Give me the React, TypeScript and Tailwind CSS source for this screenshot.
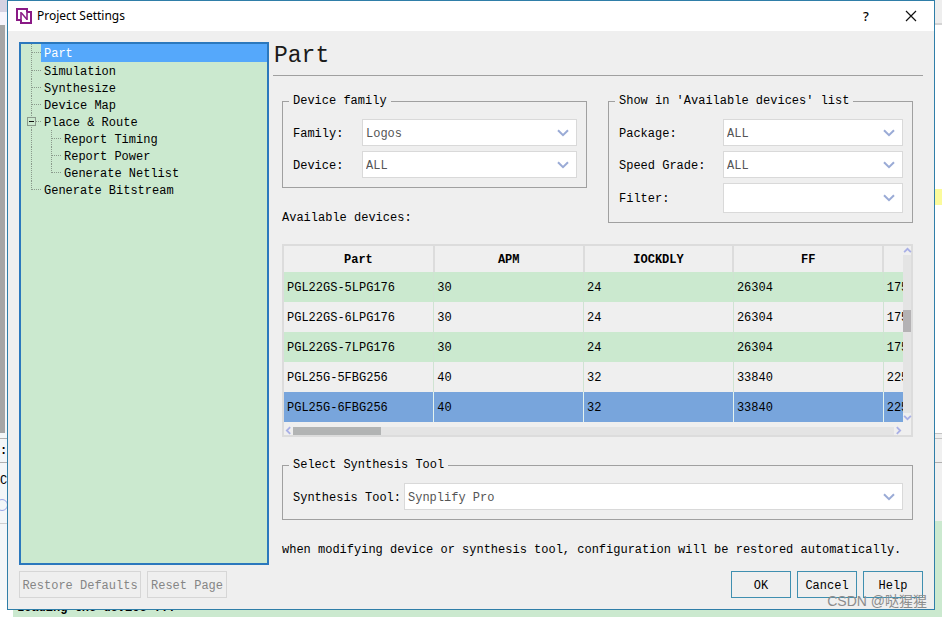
import React from "react";

const mono = "font-['Liberation_Mono','Courier_New',monospace]";

type TreeItem = { label: string; level: 0 | 1; last?: boolean; open?: boolean; selected?: boolean };

const pages: TreeItem[] = [
  { label: "Part", level: 0, selected: true },
  { label: "Simulation", level: 0 },
  { label: "Synthesize", level: 0 },
  { label: "Device Map", level: 0 },
  { label: "Place & Route", level: 0, open: true },
  { label: "Report Timing", level: 1 },
  { label: "Report Power", level: 1 },
  { label: "Generate Netlist", level: 1, last: true },
  { label: "Generate Bitstream", level: 0, last: true },
];

const columns = ["Part", "APM", "IOCKDLY", "FF", ""];

const devices = [
  ["PGL22GS-5LPG176", "30", "24", "26304", "175"],
  ["PGL22GS-6LPG176", "30", "24", "26304", "175"],
  ["PGL22GS-7LPG176", "30", "24", "26304", "175"],
  ["PGL25G-5FBG256", "40", "32", "33840", "225"],
  ["PGL25G-6FBG256", "40", "32", "33840", "225"],
];

function Logo() {
  return (
    <svg width="16" height="16" viewBox="0 0 16 16" fill="none" stroke="#8a1a86" strokeWidth="2" aria-hidden="true">
      <path d="M5 12H1V1h10v3" />
      <path d="M11 4h4v11H5v-3" />
      <path d="M5 12V4" strokeWidth="1.6" />
      <path d="M5.5 5l5.5 6.5" strokeWidth="1.4" />
      <path d="M11 12V4" strokeWidth="1.6" />
    </svg>
  );
}

function Guide({ branch, stop, open }: { branch: boolean; stop?: boolean; open?: boolean }) {
  return (
    <svg width="20" height="17" viewBox="0 0 20 17" className="shrink-0" stroke="#8a9a8c" shapeRendering="crispEdges" aria-hidden="true">
      <line x1="10.5" y1="0" x2="10.5" y2={stop ? 9 : 17} strokeDasharray="1 1" />
      {branch && <line x1="11" y1="8.5" x2="20" y2="8.5" strokeDasharray="1 1" />}
      {open && (
        <>
          <rect x="6.5" y="4.5" width="8" height="8" fill="#cbe9cf" stroke="#8a9a8c" />
          <line x1="8" y1="8.5" x2="13" y2="8.5" stroke="#111" />
        </>
      )}
    </svg>
  );
}

function Chevron({ className = "" }: { className?: string }) {
  return (
    <svg width="12" height="8" viewBox="0 0 12 8" fill="none" stroke="#9aabd6" strokeWidth="2" className={className} aria-hidden="true">
      <path d="M1 1.2l5 5 5-5" />
    </svg>
  );
}

function SmallArrow({ className = "" }: { className?: string }) {
  return (
    <svg width="9" height="9" viewBox="0 0 8 8" fill="none" stroke="#a9b0e6" strokeWidth="1.6" className={className} aria-hidden="true">
      <path d="M1 5.5l3-3 3 3" />
    </svg>
  );
}

function Field({
  id,
  label,
  labelClass,
  value,
  editable,
}: {
  id: string;
  label: string;
  labelClass: string;
  value?: string;
  editable?: boolean;
}) {
  return (
    <div className="flex items-center">
      <label htmlFor={id} className={`shrink-0 pt-0.5 ${labelClass}`}>
        {label}
      </label>
      <div className="relative min-w-0 flex-1">
        {editable ? (
          <input id={id} type="text" className="block h-[30px] w-full border border-[#d9d9d9] bg-white px-[3px] text-[#555] outline-none" />
        ) : (
          <select id={id} className="block h-[27px] w-full appearance-none border border-[#d9d9d9] bg-white px-[3px] pt-0.5 text-[#555] outline-none">
            <option>{value}</option>
          </select>
        )}
        <Chevron className="pointer-events-none absolute top-1/2 right-2 -translate-y-1/2" />
      </div>
    </div>
  );
}

function Group({ title, children }: { title: string; children: React.ReactNode }) {
  return (
    <fieldset className="min-w-0 border border-[#a0a0a0] pr-[9px] pb-[9px] pl-[10px]">
      <legend className="-ml-1 px-1 leading-[17px]">{title}</legend>
      <div className="flex flex-col gap-[5px] pt-[9px]">{children}</div>
    </fieldset>
  );
}

function Backdrop() {
  return (
    <div className={`absolute inset-0 flex flex-col overflow-hidden bg-white text-[12px] ${mono}`}>
      <div className="flex min-h-0 flex-1 justify-between">
        <div className="flex w-[13px] flex-col bg-[#f3f6f8]">
          <div className="h-3 bg-[#d5d2e2]" />
          <div className="h-[13px] bg-[#f6f4fb]" />
          <div className="h-[408px] w-[5px] bg-[#a5a5a5]" />
          <div className="mt-[5px] flex h-[25px] items-center border-y border-[#b0b0b0] font-bold">:</div>
          <div className="mt-2 h-5 leading-5">C</div>
          <div className="-ml-1 mt-2 h-3 w-3 rounded-full border border-[#9aa6e6]" />
          <div className="mt-3 h-px bg-[#cfcfcf]" />
        </div>
        <div className="flex w-[7px] flex-col">
          <div className="h-[25px] border-b-2 border-[#d4d4d4] bg-[#eeeeee]" />
          <div className="mt-[164px] h-4 bg-[#fbfb9b]" />
          <div className="mt-[228px] h-[6px] border-y border-[#c4c4c4] bg-[#eee]" />
          <div className="h-6 border-b border-[#b0b0b0] bg-[#f0f0f0]" />
          <div className="h-[58px] bg-[#f0f0f0]" />
          <div className="flex-1 bg-[#cbe9cf]" />
        </div>
      </div>
      <div className="ml-[13px] h-[17px] bg-[#cbe9cf] pl-1 leading-4 font-bold">Loading the device ...</div>
    </div>
  );
}

export default function App() {
  return (
    <div className="relative flex min-h-screen flex-col">
      <Backdrop />

      <section
        aria-label="Project Settings"
        className={`relative mx-[7px] mb-[7px] flex flex-1 flex-col border border-[#2f7ea8] bg-[#efefef] text-[12px] leading-4 text-black ${mono}`}
      >
        <header className="flex h-[30px] items-center bg-white pr-[17px] pl-2">
          <Logo />
          <h1 className="ml-[5px] flex-1 font-['Noto_Sans','Noto_Sans_CJK_SC',sans-serif] text-[12px]">Project Settings</h1>
          <button type="button" aria-label="Help" className="w-4 font-['Noto_Sans',sans-serif] text-[13px] font-medium">
            ?
          </button>
          <button type="button" aria-label="Close" className="ml-[31px]">
            <svg width="12" height="12" viewBox="0 0 12 12" stroke="#111" strokeWidth="1.2" aria-hidden="true">
              <path d="M1 1l10 10M11 1L1 11" />
            </svg>
          </button>
        </header>

        <div className="flex flex-1 gap-1 px-[11px] pt-[11px]">
          <nav className="w-[250px] shrink-0 border-2 border-[#2b78bd] bg-[#cbe9cf]">
            <ul>
              {pages.map((p) => (
                <li key={p.label} className={`flex ${p.selected ? "h-[18px]" : "h-[17px]"}`}>
                  <Guide branch={p.level === 0} stop={p.level === 0 && p.last} open={p.open} />
                  {p.level === 1 && <Guide branch stop={p.last} />}
                  <a href="#" className={`flex-1 pl-[3px] leading-5 ${p.selected ? "bg-[#55a8fb] text-white" : ""}`}>
                    {p.label}
                  </a>
                </li>
              ))}
            </ul>
          </nav>

          <main className="flex min-w-0 flex-1 flex-col">
            <h2 className="h-[34px] border-b border-[#a0a0a0] pl-px text-[23px] leading-7 text-[#1a1a1a]">Part</h2>

            <div className="flex flex-col pt-[17px] pr-[10px] pl-[9px]">
              <div className="grid grid-cols-2 items-start gap-[21px]">
                <Group title="Device family">
                  <Field id="family" label="Family:" labelClass="w-[69px]" value="Logos" />
                  <Field id="device" label="Device:" labelClass="w-[69px]" value="ALL" />
                </Group>
                <div className="row-span-2">
                  <Group title="Show in 'Available devices' list">
                    <Field id="package" label="Package:" labelClass="w-[104px]" value="ALL" />
                    <Field id="speed" label="Speed Grade:" labelClass="w-[104px]" value="ALL" />
                    <Field id="filter" label="Filter:" labelClass="w-[104px]" editable />
                  </Group>
                </div>
                <p id="devices-label" className="pt-px">
                  Available devices:
                </p>
              </div>

              <div className="mt-[18px] border-2 border-[#dcdcdc]">
                <div className="flex">
                  <div className="min-w-0 flex-1 overflow-hidden">
                    <table aria-labelledby="devices-label" className="w-[750px] table-fixed border-collapse">
                      <thead>
                        <tr className="h-[26px]">
                          {columns.map((c) => (
                            <th key={c} className="border-r-2 border-[#dcdcdc] px-0 pt-0.5 pb-0 font-bold">
                              {c}
                            </th>
                          ))}
                        </tr>
                      </thead>
                      <tbody>
                        {devices.map((row, i) => (
                          <tr key={row[0]} className={`h-[30px] ${i === 4 ? "bg-[#78a5dc]" : i % 2 === 0 ? "bg-[#cbe9cf]" : ""}`}>
                            {row.map((cell, j) => (
                              <td key={j} className={`border-r pt-0.5 pr-0 pb-0 pl-[3px] ${i === 4 ? "border-[#e4f3ee]" : "border-[#cfe3d2]"}`}>
                                {cell}
                              </td>
                            ))}
                          </tr>
                        ))}
                      </tbody>
                    </table>
                  </div>
                  <div className="flex w-2 flex-col">
                    <SmallArrow />
                    <div className="flex-1 bg-[#e4e4e4] pt-[55px]">
                      <div className="h-[22px] bg-[#b4b2b4]" />
                    </div>
                    <SmallArrow className="rotate-180" />
                  </div>
                </div>
                <div className="mt-1 flex h-[9px] items-center pr-2">
                  <SmallArrow className="-rotate-90" />
                  <div className="h-2 flex-1 bg-[#e4e4e4]">
                    <div className="h-2 w-[88px] bg-[#b2b4b4]" />
                  </div>
                  <SmallArrow className="rotate-90" />
                </div>
              </div>

              <div className="mt-5">
                <Group title="Select Synthesis Tool">
                  <Field id="tool" label="Synthesis Tool:" labelClass="w-[111px]" value="Synplify Pro" />
                </Group>
              </div>

              <p className="mt-[22px]">when modifying device or synthesis tool, configuration will be restored automatically.</p>
            </div>
          </main>
        </div>

        <footer className="flex gap-[6px] px-[11px] pt-[6px] pb-[11px]">
          <button type="button" disabled className="h-[27px] w-[122px] border border-[#d6d6d6] pt-0.5 text-[#858585]">
            Restore Defaults
          </button>
          <button type="button" disabled className="h-[27px] w-[80px] border border-[#d6d6d6] pt-0.5 text-[#858585]">
            Reset Page
          </button>
          <div className="flex-1" />
          <button type="button" className="h-[27px] w-[60px] border border-[#3f8fb0] pt-0.5">
            OK
          </button>
          <button type="button" className="h-[27px] w-[60px] border border-[#3f8fb0] pt-0.5">
            Cancel
          </button>
          <button type="button" className="h-[27px] w-[60px] border border-[#3f8fb0] pt-0.5">
            Help
          </button>
        </footer>
      </section>

      <p className="absolute right-[15px] bottom-[6px] font-['Liberation_Sans','Noto_Sans_CJK_SC',sans-serif] text-[14px] leading-5 text-[#8c8c8c]">
        CSDN @哒猩猩
      </p>
    </div>
  );
}
